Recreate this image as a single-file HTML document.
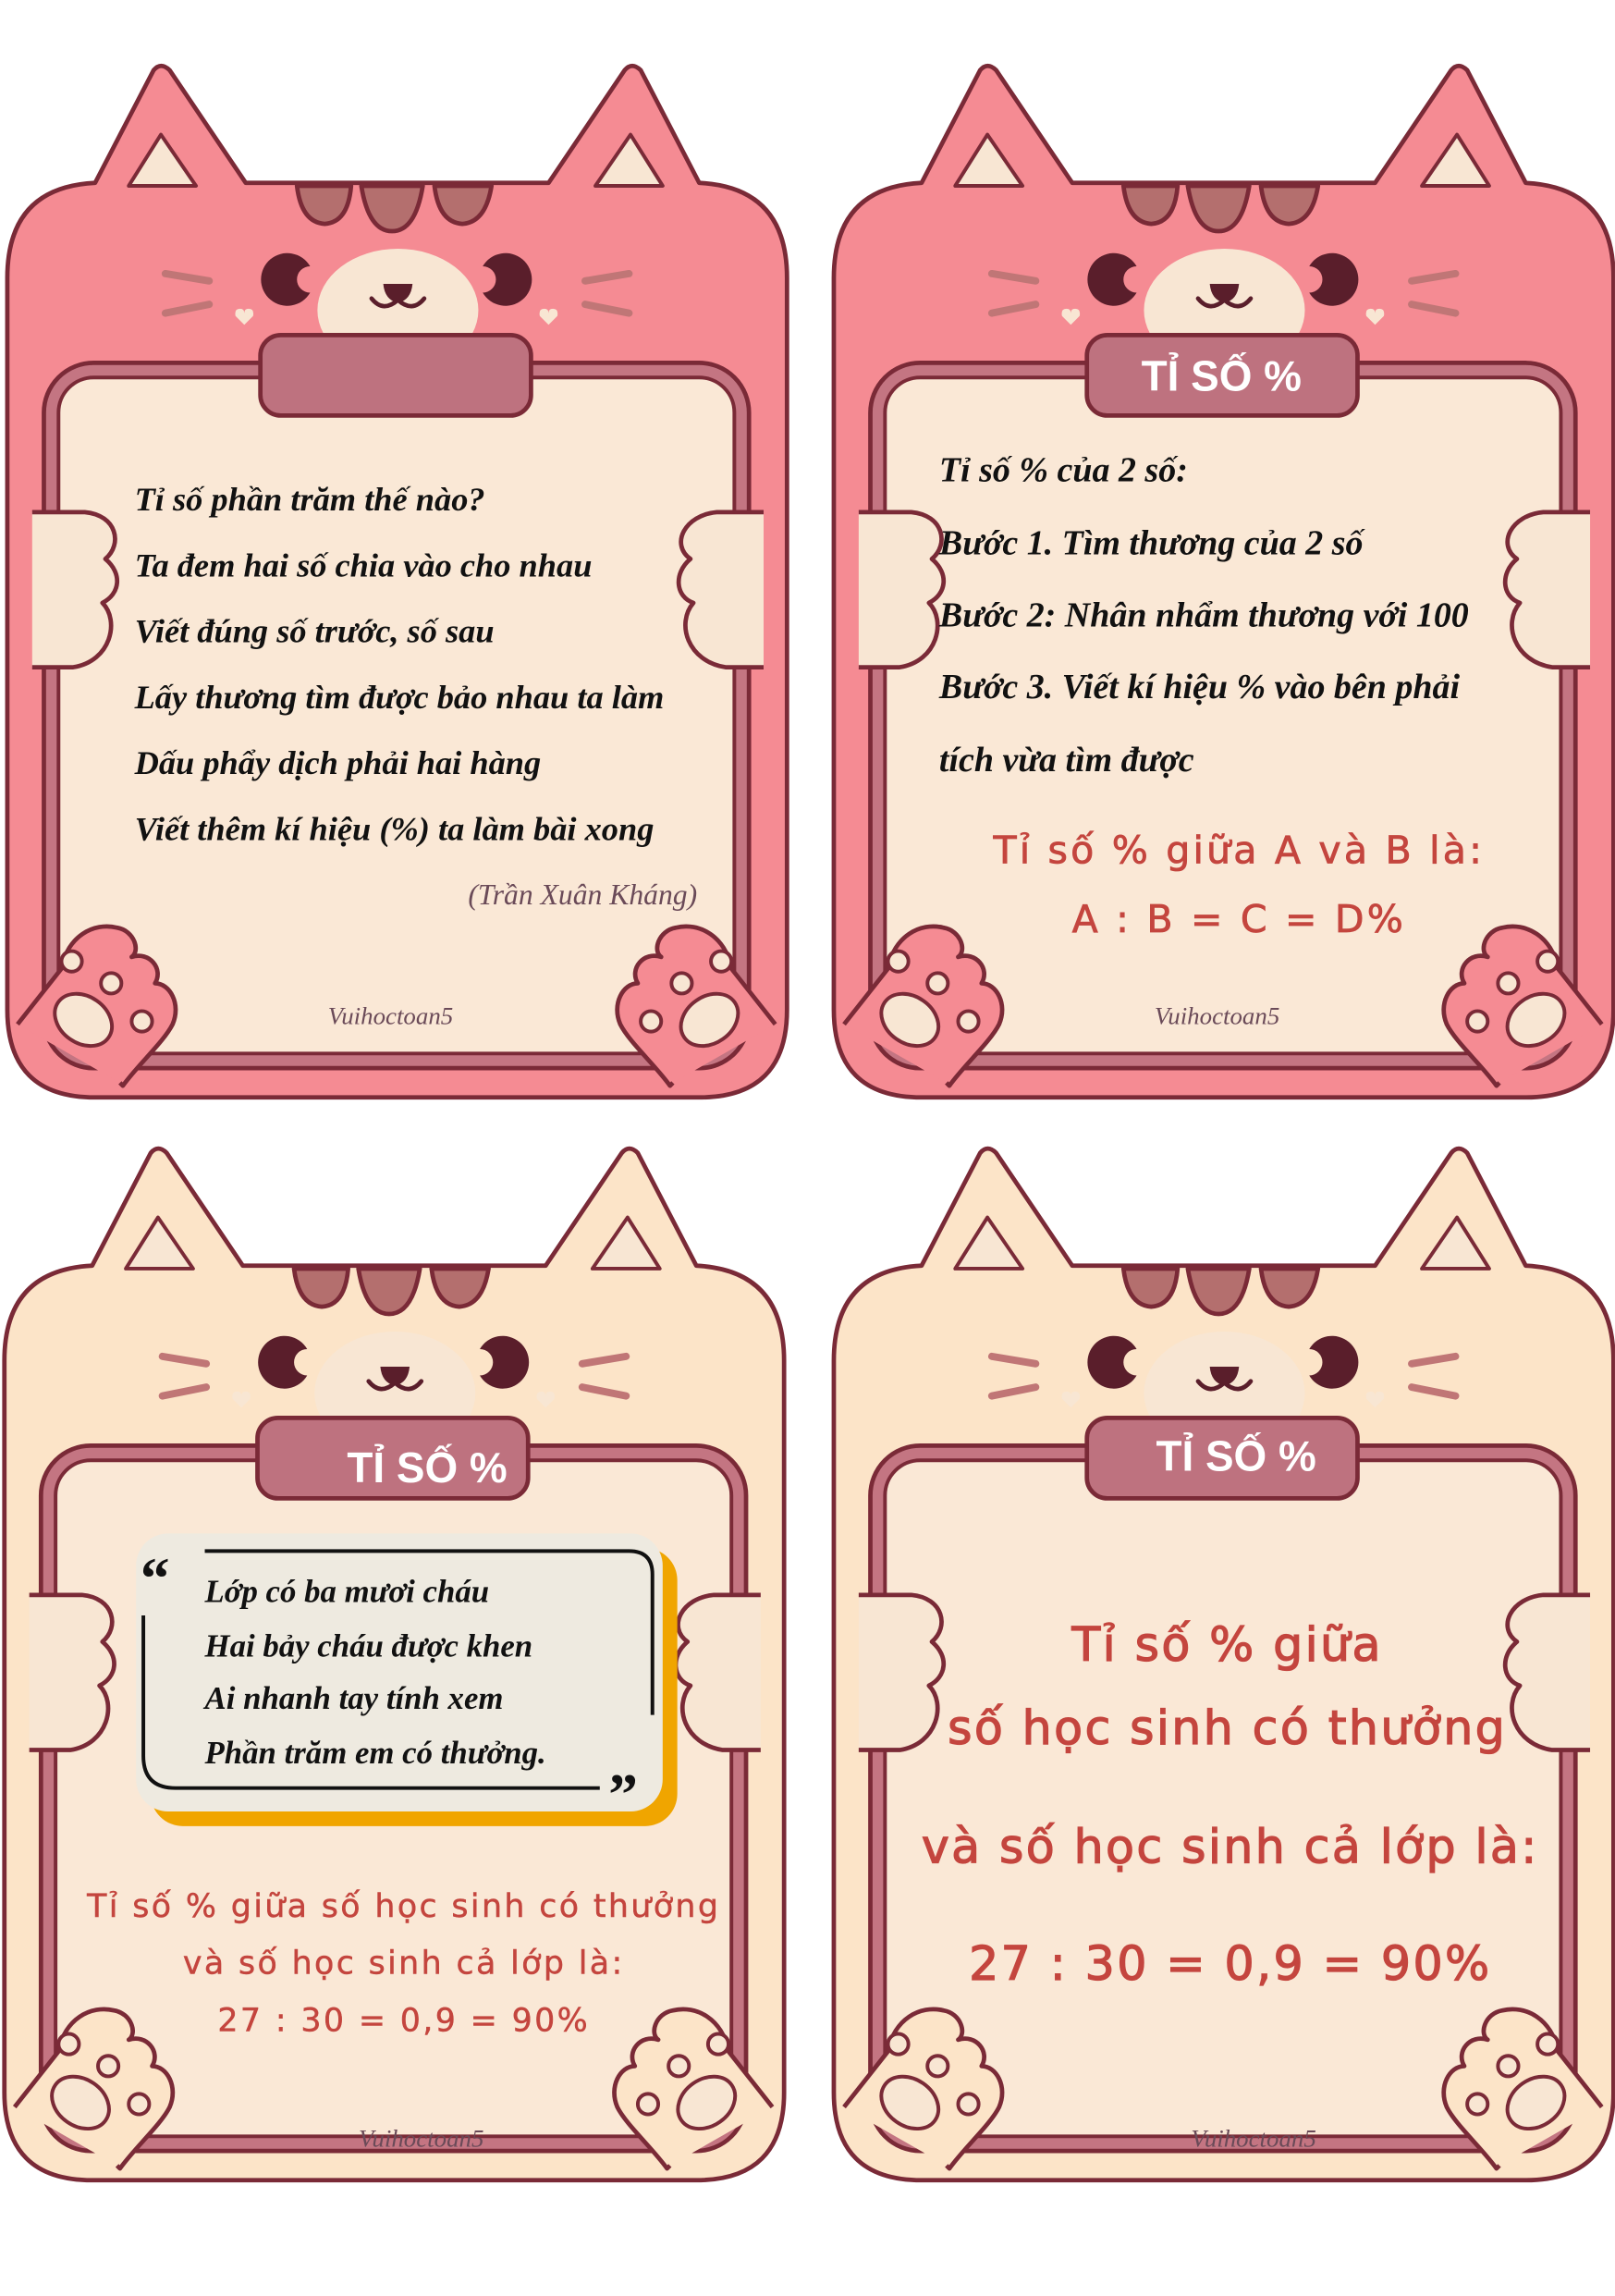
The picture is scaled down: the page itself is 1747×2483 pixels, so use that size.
<!DOCTYPE html>
<html><head><meta charset="utf-8">
<style>
html,body{margin:0;padding:0;background:#fff;}
body{width:1747px;height:2482px;overflow:hidden;position:relative;}
#w{position:absolute;left:0;top:0;width:1104px;height:1569px;transform:scale(1.5824);transform-origin:0 0;}
svg{display:block}
.scr{font-family:"Liberation Serif",serif;font-style:italic;font-weight:bold;fill:#111;}
.red{font-family:"DejaVu Sans",sans-serif;fill:#C4453E;stroke:#C4453E;}
.tab{font-family:"Liberation Sans",sans-serif;font-weight:bold;fill:#fff;}
.sig{font-family:"Liberation Serif",serif;font-style:italic;fill:#6a4a58;}
</style></head><body>
<div id="w">
<svg width="1104" height="1569" viewBox="0 0 1104 1569" xmlns="http://www.w3.org/2000/svg">
<defs>
<g id="card" stroke="#7A2A37" stroke-width="3" stroke-linejoin="round">
  <path fill="currentColor" d="M65,125 L105,48 Q110,42 116,48 L168,125 L375,125 L427,48 Q432,42 438,48 L478,125 Q538,128 538,190 L538,690 Q538,750 478,750 L65,750 Q5,750 5,690 L5,190 Q5,128 65,125 Z"/>
  <path fill="#F8E6D3" stroke-width="2.5" d="M88,127 L110,92 L134,127 Z M407,127 L431,92 L453,127 Z"/>
  <path fill="#B46F6E" stroke-width="3" d="M203,127 Q206,152 222,153 Q238,152 240,127 Z M247,127 Q252,158 268,158 Q284,158 289,127 Z M297,127 Q300,152 316,153 Q332,152 336,127 Z"/>
  <ellipse cx="272" cy="212" rx="55" ry="42" fill="#F8E6D3" stroke="none"/>
  <path fill="#5A1E2B" stroke="none" d="M272,194 L262,194 Q263,205 272,207 Q281,205 282,194 Z"/>
  <path fill="none" stroke="#5A1E2B" stroke-width="3" stroke-linecap="round" d="M254,204 Q262,214 272,205 Q282,214 290,204"/>
  <path fill="#5A1E2B" stroke="none" d="M212,182 A18,18 0 1 0 212,200 A6,6 0 0 1 212,182 Z"/>
  <path fill="#5A1E2B" stroke="none" d="M330,182 A18,18 0 1 1 330,200 A6,6 0 0 0 330,182 Z"/>
  <g stroke="#C07676" stroke-width="5" stroke-linecap="round">
    <line x1="113" y1="187" x2="143" y2="192"/><line x1="113" y1="214" x2="143" y2="208"/>
    <line x1="400" y1="192" x2="430" y2="187"/><line x1="400" y1="208" x2="430" y2="214"/>
  </g>
  <path fill="#F8E6D3" stroke="none" d="M167,222 L161,216 Q160,211 164,211 Q167,211 167,214 Q167,211 170,211 Q174,211 173,216 Z M375,222 L369,216 Q368,211 372,211 Q375,211 375,214 Q375,211 378,211 Q382,211 381,216 Z"/>
  <rect x="30" y="248" width="482" height="482" rx="34" fill="#C47582"/>
  <rect x="40" y="258" width="462" height="462" rx="24" fill="#FAE8D6" stroke-width="2.5"/>
  <rect x="178" y="229" width="185" height="55" rx="14" fill="#BE727F"/>
  <path fill="#F8E6D3" d="M22,350 L58,350 C80,352 84,372 72,382 C84,392 82,406 70,412 C82,424 76,452 50,456 L22,456"/>
  <path fill="#F8E6D3" d="M522,350 L490,350 C468,352 458,372 472,382 C460,392 462,408 474,412 C462,426 470,452 496,456 L522,456"/>
  <path fill="currentColor" d="M12,700 L42,662 C46,640 64,630 80,634 C92,636 96,650 90,654 C102,650 112,662 106,672 C116,672 124,686 118,700 C112,712 94,728 84,742 L82,740"/>
  <ellipse cx="57" cy="697" rx="21" ry="16" transform="rotate(35 57 697)" fill="#F8E6D3" stroke-width="2.5"/>
  <circle cx="49" cy="657" r="7" fill="#F8E6D3" stroke-width="2.5"/>
  <circle cx="76" cy="672" r="7" fill="#F8E6D3" stroke-width="2.5"/>
  <circle cx="97" cy="698" r="7" fill="#F8E6D3" stroke-width="2.5"/>
  <path fill="currentColor" d="M530,700 L500,662 C496,640 478,630 462,634 C450,636 446,650 452,654 C440,650 430,662 436,672 C426,672 418,686 424,700 C430,712 448,728 458,742 L460,740"/>
  <ellipse cx="485" cy="697" rx="21" ry="16" transform="rotate(-35 485 697)" fill="#F8E6D3" stroke-width="2.5"/>
  <circle cx="493" cy="657" r="7" fill="#F8E6D3" stroke-width="2.5"/>
  <circle cx="466" cy="672" r="7" fill="#F8E6D3" stroke-width="2.5"/>
  <circle cx="445" cy="698" r="7" fill="#F8E6D3" stroke-width="2.5"/>
</g>
</defs>

<use href="#card" color="#F58B93"/>
<g class="scr" font-size="23">
<text x="92" y="349">Tỉ số phần trăm thế nào?</text>
<text x="92" y="394">Ta đem hai số chia vào cho nhau</text>
<text x="92" y="439">Viết đúng số trước, số sau</text>
<text x="92" y="484">Lấy thương tìm được bảo nhau ta làm</text>
<text x="92" y="529">Dấu phẩy dịch phải hai hàng</text>
<text x="92" y="574">Viết thêm kí hiệu  (%) ta làm bài xong</text>
</g>
<text x="320" y="618" class="sig" font-size="20" style="font-weight:normal">(Trần Xuân Kháng)</text>
<text x="267" y="700" class="sig" font-size="17" text-anchor="middle">Vuihoctoan5</text>

<g transform="translate(565,0)">
<use href="#card" color="#F58B93"/>
<text x="270" y="267" class="tab" font-size="29" text-anchor="middle">TỈ SỐ %</text>
<g class="scr" font-size="24">
<text x="77" y="329">Tỉ số % của 2 số:</text>
<text x="77" y="379">Bước 1. Tìm thương của 2 số</text>
<text x="77" y="428">Bước 2: Nhân nhẩm thương với 100</text>
<text x="77" y="477">Bước 3. Viết kí hiệu % vào bên phải</text>
<text x="77" y="527">tích vừa tìm được</text>
</g>
<g class="red" font-size="26" text-anchor="middle" stroke-width="0.5" letter-spacing="2">
<text x="282" y="590">Tỉ số % giữa A và B là:</text>
<text x="282" y="637">A : B = C = D%</text>
</g>
<text x="267" y="700" class="sig" font-size="17" text-anchor="middle">Vuihoctoan5</text>
</g>

<g transform="translate(-2,740)">
<use href="#card" color="#FCE4C8"/>
<text x="294" y="273" class="tab" font-size="29" text-anchor="middle">TỈ SỐ %</text>
<rect x="105" y="318" width="360" height="190" rx="22" fill="#F0A500"/>
<rect x="95" y="308" width="360" height="190" rx="22" fill="#EEEAE0"/>
<path d="M142,320 L432,320 Q448,320 448,336 L448,432" fill="none" stroke="#111" stroke-width="2.5"/>
<path d="M100,364 L100,460 Q100,482 122,482 L412,482" fill="none" stroke="#111" stroke-width="2.5"/>
<text x="98" y="352" font-family="Liberation Serif,serif" font-weight="bold" font-size="40" fill="#111">“</text>
<text x="418" y="500" font-family="Liberation Serif,serif" font-weight="bold" font-size="40" fill="#111">”</text>
<g class="scr" font-size="22">
<text x="142" y="355">Lớp có ba mươi cháu</text>
<text x="142" y="392">Hai bảy cháu được khen</text>
<text x="142" y="428">Ai nhanh tay tính xem</text>
<text x="142" y="465">Phần trăm em có thưởng.</text>
</g>
<g class="red" font-size="22" text-anchor="middle" stroke-width="0.3" letter-spacing="1.5">
<text x="278" y="570">Tỉ số % giữa số học sinh có thưởng</text>
<text x="278" y="609">và số học sinh cả lớp là:</text>
<text x="278" y="648">27 : 30 = 0,9 = 90%</text>
</g>
<text x="290" y="727" class="sig" font-size="17" text-anchor="middle">Vuihoctoan5</text>
</g>

<g transform="translate(565,740)">
<use href="#card" color="#FCE4C8"/>
<text x="280" y="265" class="tab" font-size="29" text-anchor="middle">TỈ SỐ %</text>
<g class="red" font-size="32" text-anchor="middle" stroke-width="0.8" letter-spacing="1.5">
<text x="274" y="395">Tỉ số % giữa</text>
<text x="274" y="452">số học sinh có thưởng</text>
<text x="276" y="533">và số học sinh cả lớp là:</text>
<text x="276" y="613">27 : 30 = 0,9 = 90%</text>
</g>
<text x="292" y="727" class="sig" font-size="17" text-anchor="middle">Vuihoctoan5</text>
</g>
</svg>
</div>
</body></html>
